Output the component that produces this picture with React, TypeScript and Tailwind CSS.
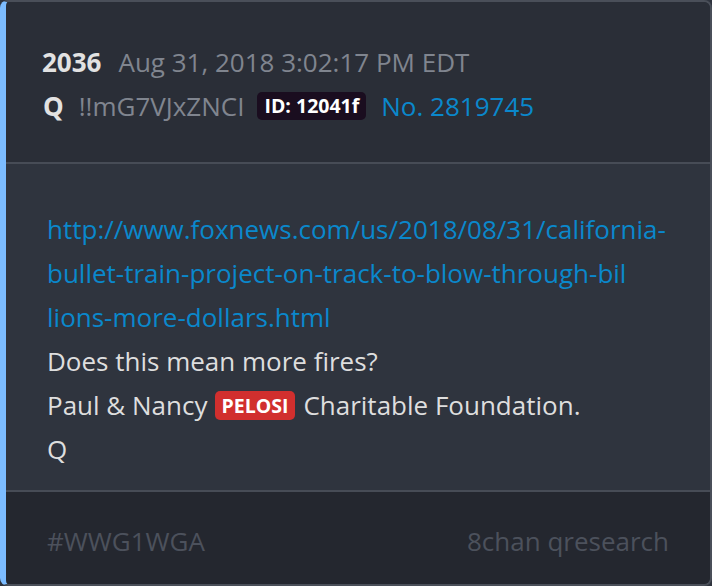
import React from "react";

export default function App() {
  return (
    <div className="w-[712px] h-[586px] bg-[#2f343e]" style={{ fontFamily: '"Open Sans", sans-serif' }}>
      <div className="w-full h-full flex flex-col border-2 border-l-[6px] border-[#4a4f59] border-l-[#7cbcff] rounded-[8px] overflow-hidden">
        <div className="bg-[#2a2e37] pl-[36px] pt-[38px] pb-[34px] text-[26px] leading-[44px] border-b-2 border-[#474c56]">
          <div className="flex items-center">
            <span className="font-bold text-[#e2e2e2]">2036</span>
            <span className="ml-[17px] text-[#80858f]">Aug 31, 2018 3:02:17 PM EDT</span>
          </div>
          <div className="flex items-center">
            <span className="font-bold text-[#e2e2e2] ml-[1px]">Q</span>
            <span className="ml-[15px] text-[#80858f]">!!mG7VJxZNCI</span>
            <span className="ml-[13px] bg-[#1a0d1f] text-white font-bold text-[19.5px] leading-[28px] px-[7px] rounded-[5px]">ID: 12041f</span>
            <span className="ml-[15px] text-[#0a88cc]">No. 2819745</span>
          </div>
        </div>
        <div className="bg-[#2f343e] pl-[41px] pt-[43px] pb-[19px] text-[26px] leading-[44px] text-[#dedede] border-b-2 border-[#474c56]">
          <div className="text-[#0a88cc]">
            <div>http://www.foxnews.com/us/2018/08/31/california-</div>
            <div>bullet-train-project-on-track-to-blow-through-bil</div>
            <div>lions-more-dollars.html</div>
          </div>
          <div>Does this mean more fires?</div>
          <div className="flex items-center">
            <span>Paul &amp; Nancy</span>
            <span className="ml-[7px] mr-[8px] bg-[#d12f2e] text-white font-bold text-[19.5px] leading-[29px] px-[7px] rounded-[5px]">PELOSI</span>
            <span>Charitable Foundation.</span>
          </div>
          <div>Q</div>
        </div>
        <div className="flex-1 bg-[#24272f] pl-[41px] pr-[41px] pt-[27px] text-[26px] leading-[44px] flex justify-between text-[#4c515c]">
          <span>#WWG1WGA</span>
          <span>8chan qresearch</span>
        </div>
      </div>
    </div>
  );
}
